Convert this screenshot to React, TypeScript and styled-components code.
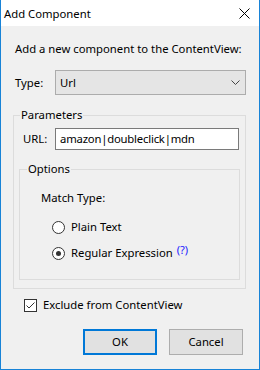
import React from 'react';
import styled, { createGlobalStyle } from 'styled-components';

const GlobalStyle = createGlobalStyle`
    html, body {
        margin: 0;
        padding: 0;
        background: #f0f0f0;
    }
    * {
        box-sizing: border-box;
    }
`;

const Window = styled.div`
    width: 260px;
    height: 370px;
    display: flex;
    flex-direction: column;
    background: #f0f0f0;
    border: 1px solid #1883d7;
    border-top: none;
    font-family: 'Noto Sans', 'Open Sans', sans-serif;
    font-size: 11.3px;
    line-height: 16px;
    color: #000;
    white-space: nowrap;
`;

const TitleBar = styled.div`
    height: 26px;
    flex: none;
    display: flex;
    align-items: center;
    justify-content: space-between;
    background: #fff;
    padding: 0 9px 0 3px;
    margin: 0 -1px;
    border-left: 1px solid #1883d7;
    border-right: 1px solid #1883d7;
`;

const Title = styled.span`
    padding-top: 1px;
`;

const Body = styled.div`
    flex: 1;
    display: flex;
    flex-direction: column;
    padding: 15px 13px 0 11px;
`;

const Intro = styled.div`
    margin-left: 3px;
`;

const FieldRow = styled.div<{ $top?: number }>`
    display: flex;
    align-items: center;
    margin-top: ${p => p.$top ?? 0}px;
`;

const Label = styled.span<{ $width: number; $indent?: number }>`
    width: ${p => p.$width}px;
    margin-left: ${p => p.$indent ?? 0}px;
    flex: none;
`;

const Select = styled.div`
    width: 191px;
    height: 25px;
    display: flex;
    align-items: center;
    justify-content: space-between;
    background: #e5e5e5;
    border: 1px solid #acacac;
    padding: 0 5px 0 4px;
`;

const Group = styled.fieldset<{ $top: number; $left: number; $right: number; $bottom: number; $pad: number }>`
    margin: ${p => p.$top}px ${p => p.$right}px 0 ${p => p.$left}px;
    padding: 0 6px ${p => p.$bottom}px ${p => p.$pad}px;
    border: 1px solid #dcdcdc;
    min-width: 0;
`;

const Legend = styled.legend<{ $shift: number }>`
    padding: 0 1px;
    margin-left: ${p => p.$shift}px;
`;

const TextInput = styled.div`
    flex: 1;
    height: 22px;
    display: flex;
    align-items: center;
    background: #fff;
    border: 1px solid #7a7a7a;
    padding: 0 4px;
    letter-spacing: -0.2px;
`;

const Caption = styled.div`
    margin-top: 13px;
`;

const RadioRow = styled.label<{ $top: number }>`
    display: flex;
    align-items: center;
    gap: 6px;
    margin: ${p => p.$top}px 0 0 11px;
`;

const RadioCircle = styled.span<{ $checked?: boolean }>`
    width: 13px;
    height: 13px;
    flex: none;
    border-radius: 50%;
    border: 1px solid #333;
    background: #fff;
    display: flex;
    align-items: center;
    justify-content: center;
    &::after {
        content: '';
        width: 5px;
        height: 5px;
        border-radius: 50%;
        background: ${p => (p.$checked ? '#333' : 'transparent')};
    }
`;

const Help = styled.span`
    color: #1a1aff;
    font-size: 11px;
    margin-left: 4px;
    position: relative;
    top: -3px;
`;

const CheckRow = styled.label`
    display: flex;
    align-items: center;
    gap: 6px;
    margin: 8px 0 0 12px;
`;

const CheckBox = styled.span`
    width: 13px;
    height: 13px;
    flex: none;
    border: 1px solid #333;
    background: #fff;
    display: flex;
    align-items: center;
    justify-content: center;
`;

const Buttons = styled.div`
    display: flex;
    justify-content: flex-end;
    gap: 12px;
    margin: 16px 3px 0 0;
`;

const Button = styled.div<{ $primary?: boolean }>`
    width: 74px;
    height: 26px;
    display: flex;
    align-items: center;
    justify-content: center;
    background: #e1e1e1;
    border: ${p => (p.$primary ? '2px solid #0078d7' : '1px solid #adadad')};
`;

const CloseIcon = () => (
    <svg width="11" height="11" viewBox="0 0 11 11">
        <path d="M0.5 0.5 L10.5 10.5 M10.5 0.5 L0.5 10.5" stroke="#000" strokeWidth="1" fill="none" />
    </svg>
);

const Chevron = () => (
    <svg width="9" height="5" viewBox="0 0 9 5">
        <path d="M0.5 0.5 L4.5 4.5 L8.5 0.5" stroke="#444" strokeWidth="1" fill="none" />
    </svg>
);

const Check = () => (
    <svg width="11" height="11" viewBox="0 0 11 11">
        <path d="M1.5 5.5 L4 8 L9.5 2.5" stroke="#333" strokeWidth="1" fill="none" />
    </svg>
);

export default function App() {
    return (
        <>
            <GlobalStyle />
            <Window>
                <TitleBar>
                    <Title>Add Component</Title>
                    <CloseIcon />
                </TitleBar>
                <Body>
                    <Intro>Add a new component to the ContentView:</Intro>
                    <FieldRow $top={13}>
                        <Label $width={40} $indent={3}>Type:</Label>
                        <Select>
                            <span>Url</span>
                            <Chevron />
                        </Select>
                    </FieldRow>
                    <Group $top={12} $left={1} $right={0} $bottom={8} $pad={9}>
                        <Legend $shift={-3}>Parameters</Legend>
                        <FieldRow $top={5}>
                            <Label $width={32}>URL:</Label>
                            <TextInput>amazon|doubleclick|mdn</TextInput>
                        </FieldRow>
                        <Group $top={11} $left={-4} $right={-1} $bottom={18} $pad={21}>
                            <Legend $shift={-14}>Options</Legend>
                            <Caption>Match Type:</Caption>
                            <RadioRow $top={13}>
                                <RadioCircle />
                                <span>Plain Text</span>
                            </RadioRow>
                            <RadioRow $top={10}>
                                <RadioCircle $checked />
                                <span>
                                    Regular Expression<Help>(?)</Help>
                                </span>
                            </RadioRow>
                        </Group>
                    </Group>
                    <CheckRow>
                        <CheckBox>
                            <Check />
                        </CheckBox>
                        <span>Exclude from ContentView</span>
                    </CheckRow>
                    <Buttons>
                        <Button $primary>OK</Button>
                        <Button>Cancel</Button>
                    </Buttons>
                </Body>
            </Window>
        </>
    );
}
